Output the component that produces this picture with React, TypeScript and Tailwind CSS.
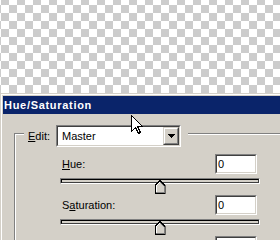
import React from "react";

function Sunken({ className, innerClassName, children }: { className?: string; innerClassName?: string; children?: React.ReactNode }) {
  return (
    <div className={"border border-t-[#808080] border-l-[#808080] border-b-white border-r-white " + (className ?? "")}>
      <div className={"h-full border border-t-[#404040] border-l-[#404040] border-b-[#d4d0c8] border-r-[#d4d0c8] " + (innerClassName ?? "")}>
        {children}
      </div>
    </div>
  );
}

function Thumb() {
  return (
    <svg width="11" height="14" viewBox="0 0 11 14" shapeRendering="crispEdges" className="absolute top-[1px] left-1/2 -translate-x-1/2">
      <polygon points="0.5,5.5 5.5,0.5 10.5,5.5 10.5,13.5 0.5,13.5" fill="#d4d0c8" stroke="#000" strokeWidth="1" />
      <polyline points="1.5,12.5 1.5,5.9 5.5,1.9" fill="none" stroke="#fff" strokeWidth="1" />
      <polyline points="5.8,2.2 9.5,5.9 9.5,12.5 1.5,12.5" fill="none" stroke="#808080" strokeWidth="1" />
    </svg>
  );
}

function SliderRow({ label, value }: { label: React.ReactNode; value: string }) {
  return (
    <div className="mb-[11px]">
      <div className="flex h-[20px] items-center justify-between pl-[2px] pr-[3px]">
        <span className="leading-[13px] whitespace-nowrap">{label}</span>
        <Sunken className="h-[20px] w-[42px]" innerClassName="bg-white pl-[1px] leading-[16px]">
          {value}
        </Sunken>
      </div>
      <div className="relative mt-[4px] h-[6px] border border-t-[#808080] border-l-[#808080] border-b-white border-r-white">
        <div className="h-full border border-t-[#000000] border-l-[#000000] border-b-[#404040] border-r-[#404040] bg-[#d4d0c8]" />
        <Thumb />
      </div>
    </div>
  );
}

export default function App() {
  return (
    <div className="relative h-[240px] w-[280px] overflow-hidden bg-[#d4d0c8] font-['Liberation_Sans',Arial,sans-serif] text-[11px] text-black">
      <div className="h-[93px] bg-[conic-gradient(#cccccc_25%,#ffffff_0_50%,#cccccc_0_75%,#ffffff_0)] bg-[length:16px_16px] bg-[position:1px_5px]" />
      <div className="h-[147px] w-[340px] bg-[#d4d0c8] pl-[3px] pt-[3px] shadow-[inset_1px_1px_0_#d4d0c8,inset_2px_2px_0_#ffffff]">
        <div className="h-[18px] whitespace-nowrap bg-[#0a246a] pl-[1px] font-bold leading-[18px] tracking-[0.7px] text-white">
          Hue/Saturation
        </div>
        <div className="pl-[11px] pt-[11px]">
          <div className="flex h-[22px]">
            <div className="mt-[8px] w-[10px] border-l border-t border-l-[#808080] border-t-[#808080] shadow-[inset_1px_1px_0_#ffffff]" />
            <span className="ml-[4px] w-[28px] self-center leading-[13px]">
              <span className="underline">E</span>dit:
            </span>
            <Sunken className="h-[22px] w-[125px]" innerClassName="flex bg-white">
              <span className="flex-1 pl-[4px] leading-[18px]">Master</span>
              <div className="h-[18px] w-[16px] border border-b-[#404040] border-l-[#d4d0c8] border-r-[#404040] border-t-[#d4d0c8]">
                <div className="flex h-full items-center justify-center border border-b-[#808080] border-l-white border-r-[#808080] border-t-white bg-[#d4d0c8]">
                  <svg width="7" height="4" viewBox="0 0 7 4" shapeRendering="crispEdges">
                    <polygon points="0,0 7,0 3.5,4" fill="#000" />
                  </svg>
                </div>
              </div>
            </Sunken>
            <div className="ml-[7px] mt-[8px] h-[2px] flex-1 border-b border-t border-b-white border-t-[#808080]" />
          </div>
          <div className="h-[120px] border-l border-l-[#808080] pl-[45px] pt-[7px] shadow-[inset_1px_0_0_#ffffff]">
            <div className="w-[200px]">
              <SliderRow label={<><span className="underline">H</span>ue:</>} value="0" />
              <SliderRow label={<>S<span className="underline">a</span>turation:</>} value="0" />
              <SliderRow label={null} value="" />
            </div>
          </div>
        </div>
      </div>
      <svg width="13" height="20" viewBox="0 0 13 20" shapeRendering="crispEdges" className="absolute left-[131px] top-[115px]">
        <path d="M0.5,0.5 L0.5,16.5 L4.5,12.5 L7.5,18.5 L9.5,17.5 L6.5,11.5 L11.5,11.5 Z" fill="#fff" stroke="#000" strokeWidth="1" />
      </svg>
    </div>
  );
}
